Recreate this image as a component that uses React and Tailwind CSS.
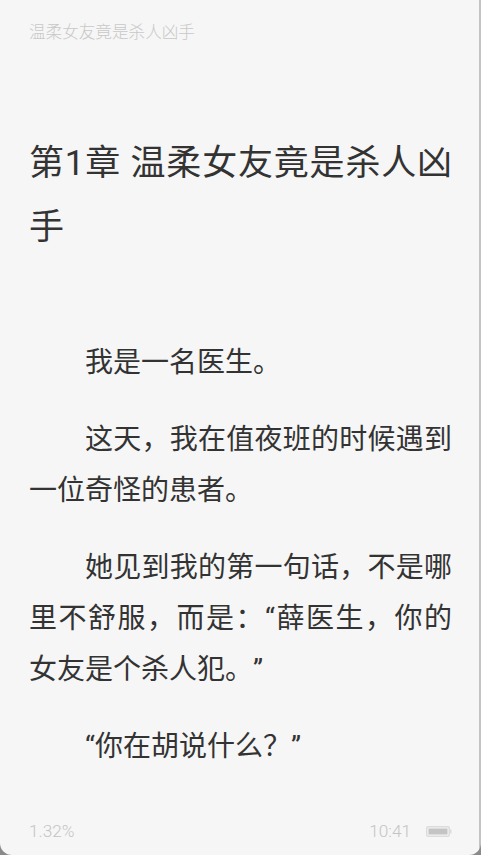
const PARAGRAPHS = [
    "我是一名医生。",
    "这天，我在值夜班的时候遇到一位奇怪的患者。",
    "她见到我的第一句话，不是哪里不舒服，而是：“薛医生，你的女友是个杀人犯。”",
    "“你在胡说什么？”"
]

const FONT = "font-['Roboto','Noto_Sans_CJK_SC',sans-serif]"

function Battery() {
    return (
        <svg width="26" height="11" viewBox="0 0 26 11" className="ml-[15px]">
            <rect x="0.75" y="0.75" width="22.5" height="9.5" rx="1.5" fill="none" stroke="#dcdcdc" strokeWidth="1.5" />
            <rect x="2.5" y="2.5" width="19" height="6" fill="#c4c4c4" />
            <rect x="24" y="3.5" width="1.5" height="4" fill="#dcdcdc" />
        </svg>
    )
}

export default function App() {
    return (
        <div className={`${FONT} relative w-[481px] h-[855px] bg-[#f6f6f6] flex flex-col px-[29px] overflow-hidden [text-spacing-trim:space-all]`}>
            <div className="h-[64px] pt-[22px] text-[16.6px] leading-[22px] font-light text-[#c8c8c8]">
                温柔女友竟是杀人凶手
            </div>

            <h1 className="mt-[68px] text-[35px] leading-[64px] font-normal text-justify text-[#333]">
                第1章 温柔女友竟是杀人凶手
            </h1>

            <div className="mt-[77px] flex-1 text-[28px] leading-[51px] font-normal text-justify text-[#333]">
                {PARAGRAPHS.map(text => (
                    <p key={text} className="indent-[56px] mb-[26px]">
                        {text}
                    </p>
                ))}
            </div>

            <div className="h-[34px] flex items-start justify-between text-[17.2px] leading-[20px] font-light text-[#c4c4c4]">
                <span>1.32%</span>
                <div className="flex items-center">
                    <span>10:41</span>
                    <Battery />
                </div>
            </div>

            {/* 右侧边线和底部圆角 */}
            <div className="absolute inset-y-0 right-0 w-[2px] bg-[#c4c4c4]" />
            <div className="absolute inset-0 rounded-b-[12px] pointer-events-none shadow-[0_0_0_12px_#8a8a8a]" />
        </div>
    )
}
